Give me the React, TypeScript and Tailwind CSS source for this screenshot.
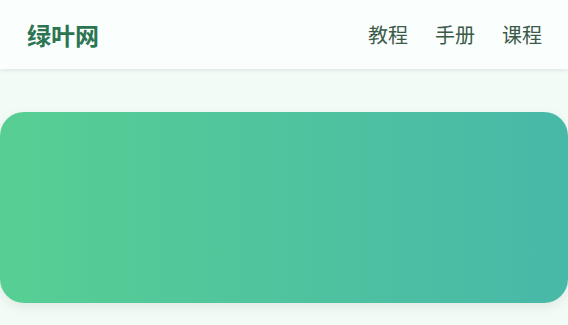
export default function App() {
  return (
    <div className="min-h-screen bg-[#f2fbf5]" style={{ fontFamily: '"Noto Sans CJK SC", "Noto Sans", sans-serif' }}>
      <header className="h-[69px] bg-[#fafefc] shadow-[0_1px_4px_rgba(0,0,0,0.1)] flex items-center justify-between pl-[27px] pr-[26px]">
        <div className="text-[24px] font-bold text-[#2b7552]">绿叶网</div>
        <nav className="flex gap-[27px] text-[20px] text-[#3b5a49]">
          <span>教程</span>
          <span>手册</span>
          <span>课程</span>
        </nav>
      </header>
      <main className="pt-[43px]">
        <div className="h-[191px] rounded-[24px] bg-gradient-to-r from-[#57cf93] to-[#48b8a8] shadow-[0_4px_12px_rgba(0,0,0,0.08)]" />
      </main>
    </div>
  );
}
